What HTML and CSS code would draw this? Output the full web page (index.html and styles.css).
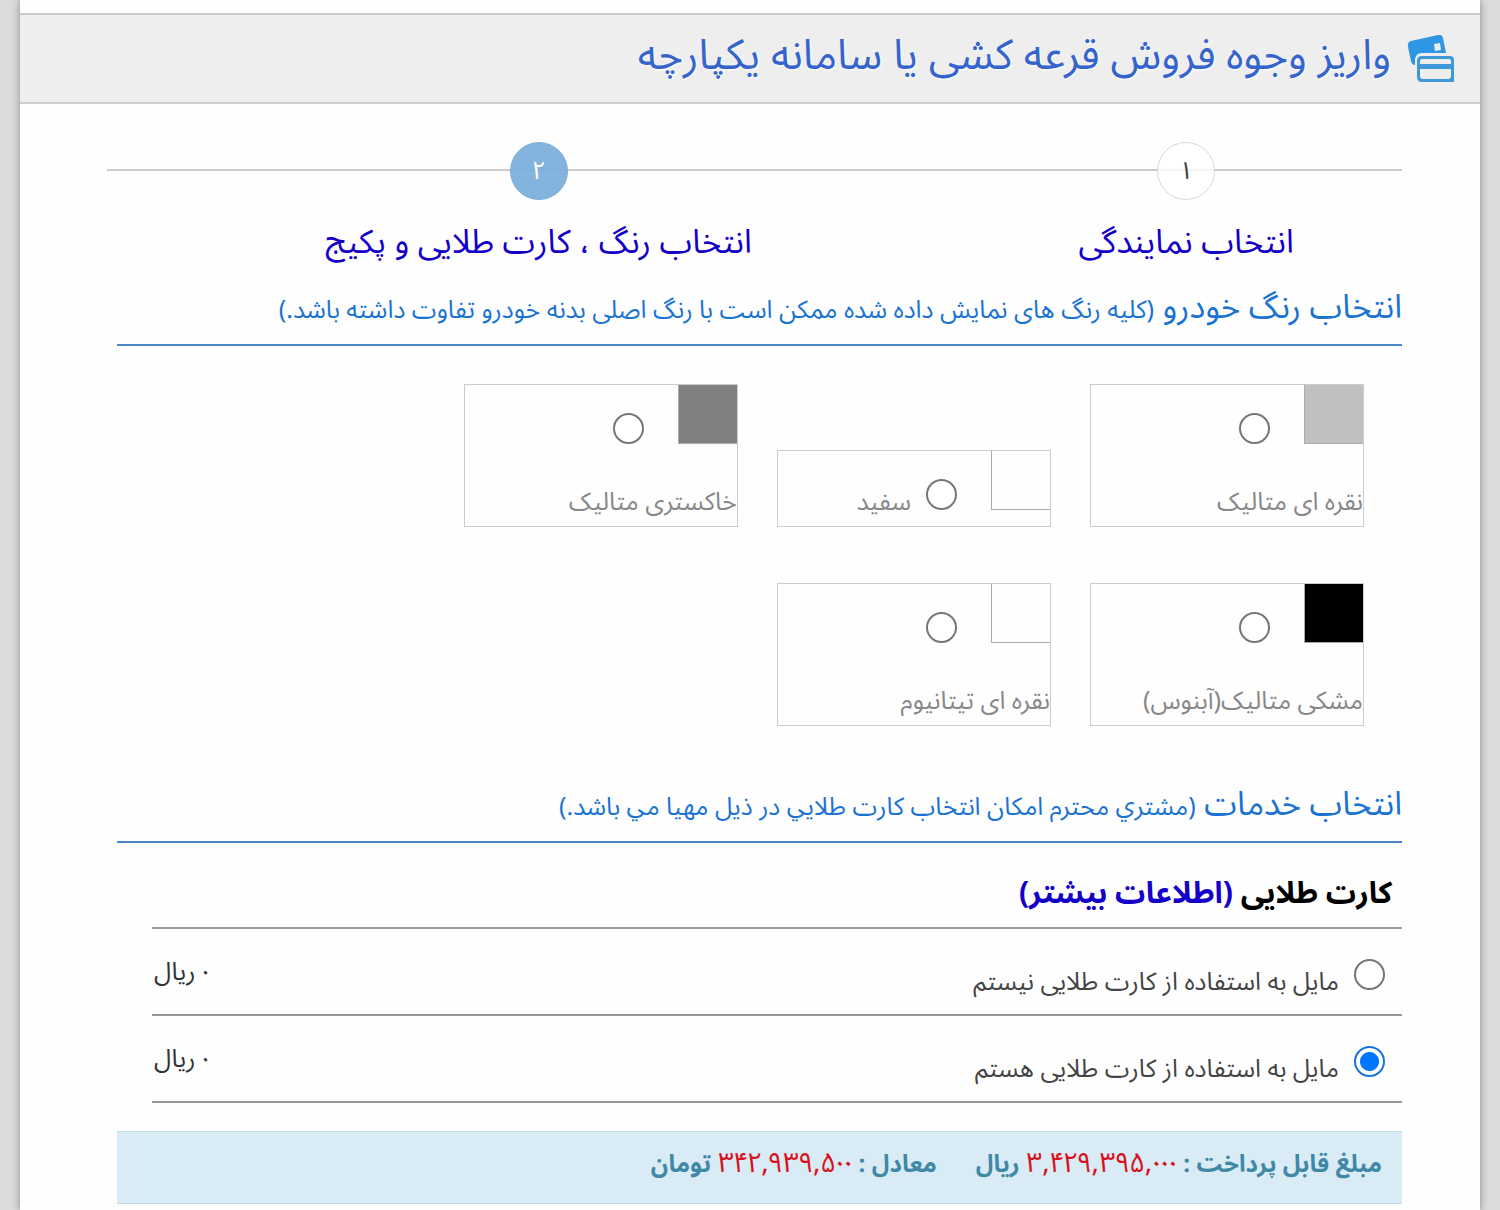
FILE: index.html
```html
<!DOCTYPE html>
<html lang="fa" dir="rtl">
<head>
<meta charset="utf-8">
<meta name="viewport" content="width=device-width, initial-scale=1">
<title>واریز وجوه فروش</title>
<link rel="stylesheet" href="styles.css">
</head>
<body>
<div class="sheet">
  <header class="page-header">
    <svg class="page-icon" viewBox="0 0 48 48" aria-hidden="true">
      <path fill="#2f96e4" fill-rule="evenodd" d="M4 6 31 0q4-1 5 3l3 15H15q-6 0-7 6v6q-3 0-4-4L1 12q-1-5 3-6zM27 9l1 7 6-1-1-7z"/>
      <path fill="#3f99d8" fill-rule="evenodd" d="M15 21h28q4 0 4 4v22H15q-5 0-5-5V26q0-5 5-5zm0 3q-2 0-2 2v3h31v-3q0-2-2-2zm-2 10v7q0 3 3 3h25q3 0 3-3v-7z"/>
    </svg>
    <h1 class="page-title">واریز وجوه فروش قرعه کشی یا سامانه یکپارچه</h1>
  </header>

  <main class="content">
    <ol class="steps">
      <li class="step"><span class="step-number">۱</span><a class="step-link" href="#agency">انتخاب نمایندگی</a></li>
      <li class="step step-current"><span class="step-number">۲</span><a class="step-link" href="#color">انتخاب رنگ ، کارت طلایی و پکیج</a></li>
    </ol>

    <section class="section" id="color">
      <h2 class="section-title">انتخاب رنگ خودرو <small class="section-note">(کلیه رنگ های نمایش داده شده ممکن است با رنگ اصلی بدنه خودرو تفاوت داشته باشد.)</small></h2>
      <div class="colors">
        <label class="color"><span class="swatch swatch-silver"></span><input class="radio" type="radio" name="color"><span class="color-name">نقره ای متالیک</span></label>
        <label class="color"><span class="swatch"></span><input class="radio" type="radio" name="color"><span class="color-name">سفید</span></label>
        <label class="color"><span class="swatch swatch-gray"></span><input class="radio" type="radio" name="color"><span class="color-name">خاکستری متالیک</span></label>
        <label class="color"><span class="swatch swatch-black"></span><input class="radio" type="radio" name="color"><span class="color-name">مشکی متالیک(آبنوس)</span></label>
        <label class="color"><span class="swatch"></span><input class="radio" type="radio" name="color"><span class="color-name">نقره ای تیتانیوم</span></label>
      </div>
    </section>

    <section class="section">
      <h2 class="section-title">انتخاب خدمات <small class="section-note">(مشتري محترم امکان انتخاب کارت طلايي در ذیل مهیا مي باشد.)</small></h2>
      <div class="service">
        <h3 class="service-title">کارت طلایی <a href="#more">(اطلاعات بیشتر)</a></h3>
        <div class="option">
          <label class="option-label"><input class="radio" type="radio" name="card"><span class="option-text">مایل به استفاده از کارت طلایی نیستم</span></label>
          <span class="price">۰ ریال</span>
        </div>
        <div class="option">
          <label class="option-label"><input class="radio" type="radio" name="card" checked><span class="option-text">مایل به استفاده از کارت طلایی هستم</span></label>
          <span class="price">۰ ریال</span>
        </div>
      </div>
    </section>

    <div class="total">
      <span>مبلغ قابل پرداخت : <b class="amount">۳,۴۲۹,۳۹۵,۰۰۰</b> ریال</span>
      <span>معادل : <b class="amount">۳۴۲,۹۳۹,۵۰۰</b> تومان</span>
    </div>
  </main>
</div>
</body>
</html>
```
FILE: styles.css
```css
* { box-sizing: border-box; }

body {
  margin: 0;
  background: #dcdcdc;
  color: #333;
  font-family: "Noto Sans Arabic UI", "Noto Sans Arabic", "Noto Sans", sans-serif;
  font-size: 25px;
  line-height: 36px;
}

h1, h2, h3, ol { margin: 0; padding: 0; font-weight: 400; }
a { color: #1400c8; text-decoration: none; }

.sheet {
  margin: 0 20px;
  padding: 13px 0 7px;
  background: #fefefe;
  box-shadow: 0 0 8px #888;
}

.page-header {
  display: flex;
  gap: 16px;
  height: 91px;
  padding: 20px 25px 0;
  border: solid #ccc;
  border-width: 2px 0;
  background: #eee;
}
.page-icon { width: 48px; height: 48px; }
.page-title {
  color: #3564cb;
  font-size: 42px;
  line-height: 36px;
  text-shadow: 1px 1px 2px #fff;
}

.content { padding: 38px 78px 0 97px; }

.steps {
  display: flex;
  margin-inline-end: -10px;
  list-style: none;
}
.step {
  position: relative;
  flex: 1;
  display: flex;
  flex-direction: column;
  align-items: center;
  gap: 23px;
}
.step-current { flex: 2; }
.step::before {
  content: "";
  position: absolute;
  inset: 27px 0 auto;
  height: 2px;
  background: #ccc;
}
.step-number {
  position: relative;
  width: 58px;
  height: 58px;
  border: 1px solid #d8d8d8;
  border-radius: 50%;
  background: rgba(255, 255, 255, .8);
  color: #444;
  line-height: 52px;
  text-align: center;
}
.step-current .step-number {
  border-color: #80b0dc;
  background: rgba(122, 172, 218, .92);
  color: #fff;
}
.step-link { font-size: 33px; }

.section-title {
  padding-bottom: 14px;
  border-bottom: 2px solid #4a86c6;
  color: #1a73d1;
  font-size: 33px;
  line-height: 44px;
}
.section-note { font-size: 25px; }
#color { padding-top: 25px; }

.colors {
  display: grid;
  grid-template-columns: repeat(3, 274px);
  gap: 56px 39px;
  align-items: end;
  padding: 38px 38px 55px;
}
.color {
  display: flex;
  flex-wrap: wrap;
  align-items: baseline;
  row-gap: 38px;
  padding-bottom: 8px;
  border: 1px solid #ccc;
  color: #888;
}
.swatch {
  width: 59px;
  height: 59px;
  border: solid #aaa;
  border-width: 0 0 1px 1px;
}
.swatch-silver { background: #c0c0c0; }
.swatch-gray { background: #808080; }
.swatch-black { background: #000; }

.radio {
  appearance: none;
  width: 31px;
  height: 31px;
  margin: 0;
  border: 2px solid #767676;
  border-radius: 50%;
  background: #fff;
}
.radio:checked {
  border-color: #1a73d8;
  background: radial-gradient(circle, #0075ff 9px, #fff 10px);
}
.color .radio { margin: 0 34px 0 15px; }

.service { padding-inline-end: 35px; }
.service-title {
  padding: 27px 10px 13px;
  border-bottom: 2px solid #999;
  color: #000;
  font-size: 30px;
  line-height: 44px;
  font-weight: 700;
}
.option {
  display: flex;
  justify-content: space-between;
  height: 87px;
  padding: 23px 17px 0 2px;
  border-bottom: 2px solid #999;
}
.option-label { display: flex; gap: 15px; color: #444; }
.option .radio { margin-top: 7px; }
.option-text { padding-top: 10px; }

.total {
  display: flex;
  gap: 39px;
  margin-top: 28px;
  padding: 11px 20px 22px;
  border: solid #bcdfe6;
  border-width: 1px 0;
  background: #d9ebf5;
  color: #3f88a6;
  font-size: 24px;
  font-weight: 700;
}
.amount { color: #d8121c; font-size: 28px; font-weight: 400; }
```
